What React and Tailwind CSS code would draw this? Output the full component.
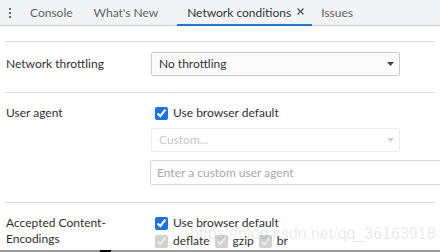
import { useState } from "react";

const tabs = [
  { id: "console", label: "Console", pad: "pl-[10px] pr-[11px]" },
  { id: "whatsnew", label: "What's New", pad: "pl-[10px] pr-[19px]" },
  { id: "network", label: "Network conditions", closable: true, pad: "pl-[10px] pr-[8px]" },
  { id: "issues", label: "Issues", pad: "pl-[9px] pr-[10px]" },
];

const Arrow = ({ color }) => (
  <svg width="7" height="4" viewBox="0 0 7 4" className="shrink-0">
    <path d="M0 0 L7 0 L3.5 4 Z" fill={color} />
  </svg>
);

const Check = ({ label, checked = true, disabled = false, className = "" }) => (
  <label className={`flex items-center ${className}`}>
    <input
      type="checkbox"
      defaultChecked={checked}
      disabled={disabled}
      className="m-0 w-[13px] h-[13px] accent-[#1a73e8]"
    />
    <span className="ml-[5px]">{label}</span>
  </label>
);

export default function App() {
  const [active, setActive] = useState("network");

  return (
    <div
      className="relative w-[440px] h-[252px] overflow-hidden bg-white text-[12px] text-[#303030]"
      style={{ fontFamily: "Lato, 'Open Sans', sans-serif" }}>
      {/* Tab strip */}
      <div className="flex items-stretch h-[26px] bg-[#f1f3f4] border-b border-[#cbcdd1]">
        <div className="w-[20px] flex flex-col items-center justify-center gap-[2px]">
          <span className="block w-[2px] h-[2px] bg-[#6e6e6e]" />
          <span className="block w-[2px] h-[2px] bg-[#6e6e6e]" />
          <span className="block w-[2px] h-[2px] bg-[#6e6e6e]" />
        </div>
        {tabs.map((tab) => {
          const isActive = tab.id === active;
          return (
            <button
              key={tab.id}
              onClick={() => setActive(tab.id)}
              className={`relative flex items-center ${tab.pad} ${isActive ? "text-[#333]" : "text-[#5f6368]"}`}>
              <span>{tab.label}</span>
              {tab.closable && (
                <svg width="7" height="7" viewBox="0 0 7 7" className="ml-[6px] mb-[2px]">
                  <path d="M0.5 0.5 L6.5 6.5 M6.5 0.5 L0.5 6.5" stroke="#555" strokeWidth="1.3" />
                </svg>
              )}
              {isActive && <span className="absolute left-0 right-0 -bottom-px h-[2px] bg-[#1a73e8]" />}
            </button>
          );
        })}
      </div>

      {/* Settings */}
      <div className="pt-[15px] px-[5px]">
        {/* Network throttling */}
        <div className="flex items-center border-t border-[#dcdcdc] pt-[10px] pb-[16px]">
          <div className="w-[146px] shrink-0 pl-px">Network throttling</div>
          <div className="flex items-center justify-between shrink-0 w-[249px] h-[24px] pl-[7px] pr-[5px] border border-[#cdcdcd] rounded-[2px] bg-[#fbfbfb] text-[#333]">
            <span>No throttling</span>
            <Arrow color="#444" />
          </div>
        </div>

        {/* User agent */}
        <div className="flex items-start border-t border-[#dcdcdc] pt-[11px] pb-[17px]">
          <div className="w-[146px] shrink-0 pl-px leading-[18px]">User agent</div>
          <div className="flex flex-col shrink-0">
            <Check label="Use browser default" className="pl-[4px] leading-[18px]" />
            <div className="mt-[6px] flex items-center justify-between w-[249px] h-[24px] pl-[7px] pr-[5px] border border-[#ececec] rounded-[2px] text-[#c8c8c8]">
              <span>Custom...</span>
              <Arrow color="#cfcfcf" />
            </div>
            <div className="mt-[8px] flex items-center w-[320px] h-[25px] -ml-px pl-[6px] border border-[#dadada] rounded-[2px] text-[#a8a8a8]">
              Enter a custom user agent
            </div>
          </div>
        </div>

        {/* Accepted Content-Encodings */}
        <div className="flex items-start border-t border-[#dcdcdc] pt-[11px]">
          <div className="w-[146px] shrink-0 pl-px mt-px leading-[16px]">
            Accepted Content-
            <br />
            Encodings
          </div>
          <div className="flex flex-col shrink-0 leading-[18px]">
            <Check label="Use browser default" className="pl-[4px]" />
            <div className="flex items-center pl-[4px]">
              <Check label="deflate" disabled />
              <Check label="gzip" disabled className="ml-[5px]" />
              <Check label="br" disabled className="ml-[5px]" />
            </div>
          </div>
        </div>
      </div>

      {/* watermark */}
      <div
        className="absolute left-[190px] top-[226px] text-[16px] leading-none text-black/10 pointer-events-none"
        style={{ fontFamily: "'Liberation Sans', Arial, sans-serif" }}>
        https://blog.csdn.net/qq_36163918
      </div>

      {/* window edge */}
      <div className="absolute left-0 right-0 bottom-0 h-[2px] bg-[#9a9a9a]" />
      <div className="absolute left-[100px] bottom-0 w-[11px] h-[2px] bg-black" />
    </div>
  );
}
